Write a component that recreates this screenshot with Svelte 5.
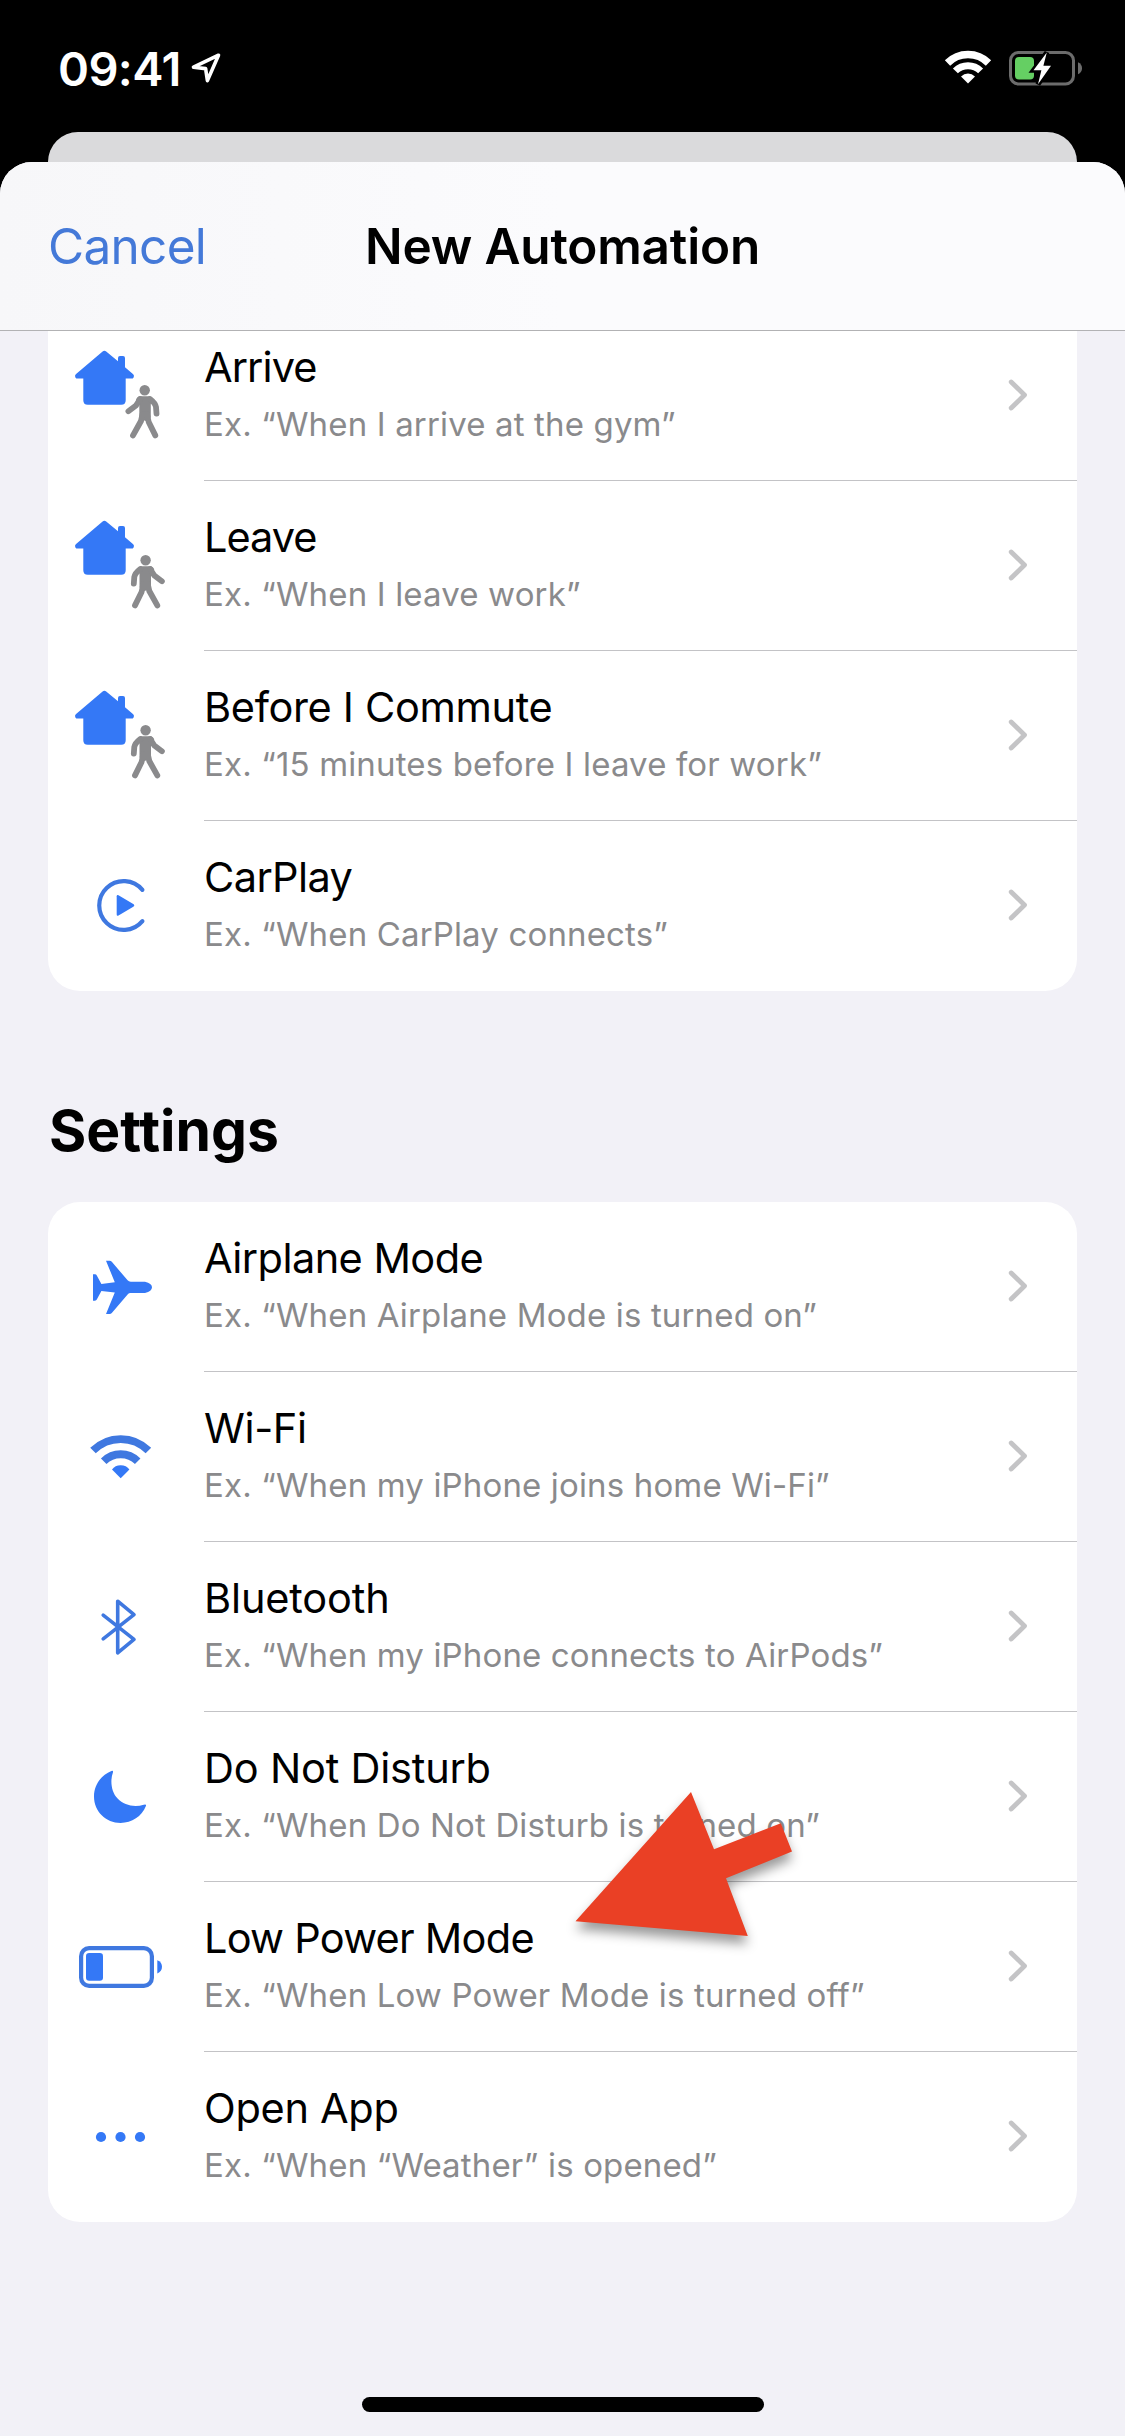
<script>
	// tracking is the letter spacing of the title in px
	const travel = [
		{ icon: 'arrive', title: 'Arrive', tracking: -0.9, example: 'When I arrive at the gym' },
		{ icon: 'leave', title: 'Leave', tracking: -1, example: 'When I leave work' },
		{ icon: 'leave', title: 'Before I Commute', tracking: -0.34, example: '15 minutes before I leave for work' },
		{ icon: 'carplay', title: 'CarPlay', tracking: -0.6, example: 'When CarPlay connects' }
	];

	const settings = [
		{ icon: 'airplane', title: 'Airplane Mode', tracking: -0.55, example: 'When Airplane Mode is turned on' },
		{ icon: 'wifi', title: 'Wi-Fi', tracking: -0.4, example: 'When my iPhone joins home Wi-Fi' },
		{ icon: 'bluetooth', title: 'Bluetooth', tracking: -0.15, example: 'When my iPhone connects to AirPods' },
		{ icon: 'moon', title: 'Do Not Disturb', tracking: -0.2, example: 'When Do Not Disturb is turned on' },
		{ icon: 'battery', title: 'Low Power Mode', tracking: -0.75, example: 'When Low Power Mode is turned off' },
		{ icon: 'dots', title: 'Open App', tracking: -0.3, example: 'When “Weather” is opened' }
	];
</script>

{#snippet walker()}
	<g class="walker">
		<circle cx="96.7" cy="79.3" r="5.2" />
		<path d="M92 85.2H101.5Q103.5 85.2 104 88L102.8 93V106.5L97.5 110L91.3 107V93L88 88.5Q89.5 85.2 92 85.2Z" />
		<path class="limb" d="M92.2 88L88 94.5L80.4 100.2M102 88Q107.2 92 108 96L108.5 102.6M94.6 103L93 110L85 124.4M99 103L100.7 111L107.3 124.4" />
	</g>
{/snippet}

{#snippet glyph(name)}
	<svg class="glyph" viewBox="0 0 156 170">
		{#if name === 'arrive' || name === 'leave'}
			<path
				class="house"
				d="M54.6 40.4Q56.4 39 58.2 40.4L70 50.2V47Q70 45 72 45H75Q77 45 77 47V56.2L85.2 63.2Q86.6 64.6 85.6 66.4Q84.9 67.6 83.4 67.6H77.7V89.2Q77.7 93.8 73.2 93.8H39.8Q35.3 93.8 35.3 89.2V67.6H29.6Q28.1 67.6 27.4 66.4Q26.4 64.6 27.8 63.2Z"
			/>
			{#if name === 'leave'}
				<g transform="matrix(-1 0 0 1 194.3 0)">{@render walker()}</g>
			{:else}
				{@render walker()}
			{/if}
		{:else if name === 'carplay'}
			<path class="line" stroke-width="4.2" d="M94.4 68.9A24.4 24.4 0 1 0 94.4 100.1" />
			<path d="M68.7 75.3Q68.7 73.4 70.5 74.3L85.7 83.3Q87 84.4 85.7 85.4L70.5 94.4Q68.7 95.3 68.7 93.4Z" />
		{:else if name === 'airplane'}
			<path
				d="M58 58.7H61.6Q62.9 58.7 63.8 59.8L79.6 78.3Q80.8 79.7 82.7 79.7H97Q104 81.5 104 85.3Q104 89.2 97 91H82.7Q80.8 91 79.6 92.4L63.8 110.9Q62.9 112 61.6 112H58L66.8 90.4L53.4 89L48.8 97.6Q48.2 98.7 47 98.7H45V72.3H47Q48.2 72.3 48.8 73.4L53.4 82L66.8 80.3Z"
			/>
		{:else if name === 'wifi'}
			<path class="line flat" stroke-width="7.8" d="M45 78.6A39 39 0 0 1 100.4 78.6M55.7 89.3A24 24 0 0 1 89.7 89.3" />
			<path d="M72.7 106.2L64 97.6Q67 93.2 72.7 93.2T81.4 97.6Z" />
		{:else if name === 'bluetooth'}
			<path class="line" stroke-width="3.6" d="M55.2 73.2L86 97.4L69.7 110.8V59.2L86 72.6L55.2 96.8" />
		{:else if name === 'moon'}
			<path
				d="M63.4 58.9Q65.4 58.2 65 60.2C62 68 63 79.5 69.6 86.6C76 93.6 86.5 95.5 95.8 92.8Q98.6 92 97.9 94C93.8 104.4 83.8 110.9 72.6 110.9C57.9 110.9 46 99.5 46 84.5C46 73 53 63 63.4 58.9Z"
			/>
		{:else if name === 'battery'}
			<rect class="line" stroke-width="4.2" x="33.1" y="66.2" width="70.8" height="37.6" rx="8" />
			<rect x="38" y="71" width="17" height="27.8" rx="3.2" />
			<path d="M109.3 78.2Q114 80 114 84.8T109.3 91.4Z" />
		{:else if name === 'dots'}
			<circle cx="53" cy="85" r="5.1" />
			<circle cx="72.5" cy="85" r="5.1" />
			<circle cx="92" cy="85" r="5.1" />
		{/if}
	</svg>
{/snippet}

{#snippet row(item)}
	<li class="row">
		{@render glyph(item.icon)}
		<div class="content">
			<div class="copy">
				<span class="title" style:letter-spacing="{item.tracking}px">{item.title}</span>
				<span class="example">Ex. “{item.example}”</span>
			</div>
			<svg class="chevron" viewBox="0 0 20 32">
				<path d="M3.2 3L16.5 16L3.2 29" />
			</svg>
		</div>
	</li>
{/snippet}

<div class="phone">
	<div class="status">
		<div class="clock">
			<span class="time">09:41</span>
			<svg class="location" width="30" height="30" viewBox="0 0 30 30">
				<path d="M27.5 2.2L2.5 14.2L14.6 15.6L16.4 27.6Z" />
			</svg>
		</div>
		<div class="indicators">
			<svg width="48" height="34" viewBox="0 0 48 34">
				<g class="signal">
					<path stroke-width="7.5" d="M3.5 13A29 29 0 0 1 44.5 13" />
					<path stroke-width="7" d="M11.4 20.9A17.8 17.8 0 0 1 36.6 20.9" />
				</g>
				<path fill="#fff" d="M24 33.5L17 26.4Q20 23.6 24 23.6T31 26.4Z" />
			</svg>
			<svg width="74" height="36" viewBox="0 0 74 36">
				<rect class="shell" x="1.5" y="2.5" width="63" height="31.5" rx="8" />
				<path fill="#6c6c6c" d="M69 12.2Q73 14 73 18.2T69 24.2Z" />
				<rect fill="#65cf63" x="6" y="7" width="19" height="22.5" rx="4" />
				<path class="bolt" d="M37.8 2.5L24.5 20.2H32.4L29 34.2L42 15.8H34.4Z" />
			</svg>
		</div>
	</div>

	<div class="behind"></div>

	<div class="sheet">
		<header>
			<span class="cancel">Cancel</span>
			<h1>New Automation</h1>
		</header>
		<div class="scroll">
			<ul class="card continued">
				{#each travel as item}
					{@render row(item)}
				{/each}
			</ul>
			<h2>Settings</h2>
			<ul class="card">
				{#each settings as item}
					{@render row(item)}
				{/each}
			</ul>
		</div>
	</div>

	<svg class="pointer" width="240" height="180" viewBox="0 0 240 180">
		<path d="M126 12L149 69.3L215.8 43.3L227 71.5L161 98.3L182.8 156L10.5 141.2Z" />
	</svg>
	<div class="home-bar"></div>
</div>

<style>
	:global(body) {
		margin: 0;
		background: #000;
	}

	.phone {
		position: relative;
		display: flex;
		flex-direction: column;
		width: 1125px;
		height: 2436px;
		overflow: hidden;
		background: #000;
		color: #000;
		font-family: Inter, 'Liberation Sans', sans-serif;
	}

	.status {
		display: flex;
		justify-content: space-between;
		box-sizing: border-box;
		height: 132px;
		padding: 50px 42px 0 58px;
		color: #fff;
	}

	.clock,
	.indicators {
		display: flex;
		height: 36px;
	}

	.time {
		font-size: 47px;
		font-weight: 600;
		line-height: 38px;
		letter-spacing: -0.6px;
	}

	.location {
		margin: 3px 0 0 10px;
		fill: none;
		stroke: #fff;
		stroke-width: 3.6;
		stroke-linejoin: round;
	}

	.indicators {
		gap: 17px;
	}

	.signal {
		fill: none;
		stroke: #fff;
	}

	.shell {
		fill: none;
		stroke: #6c6c6c;
		stroke-width: 3;
	}

	.bolt {
		fill: #fff;
		stroke: #000;
		stroke-width: 5;
		paint-order: stroke;
	}

	.behind {
		height: 30px;
		margin: 0 48px;
		border-radius: 30px 30px 0 0;
		background: #dadadc;
	}

	.sheet {
		display: flex;
		flex: 1;
		flex-direction: column;
		overflow: hidden;
		border-radius: 32px 32px 0 0;
		background: #f2f1f7;
	}

	header {
		display: grid;
		grid-template-columns: 1fr auto 1fr;
		align-items: center;
		box-sizing: border-box;
		height: 169px;
		padding: 0 48px;
		border-bottom: 1px solid #b2b2b4;
		background: linear-gradient(90deg, #f7f7f9, #fbfbfd 50%);
		line-height: 60px;
	}

	.cancel {
		color: #4479d8;
		font-size: 49.5px;
		letter-spacing: -0.7px;
	}

	h1 {
		margin: 0;
		font-size: 49.5px;
		font-weight: 600;
		letter-spacing: -0.17px;
	}

	.scroll {
		flex: 1;
		overflow: hidden;
		padding: 0 48px;
	}

	.card {
		margin: 0;
		padding: 0;
		overflow: hidden;
		list-style: none;
		border-radius: 32px;
		background: #fff;
	}

	/* already scrolled under the header */
	.continued {
		margin-top: -20px;
		border-radius: 0 0 32px 32px;
	}

	h2 {
		margin: 0;
		padding: 105px 0 36px 1px;
		font-size: 57px;
		font-weight: 700;
		line-height: 70px;
		letter-spacing: 0;
	}

	.row {
		display: flex;
		height: 170px;
	}

	.glyph {
		flex: none;
		width: 156px;
		height: 170px;
		fill: #3478f6;
	}

	.line {
		fill: none;
		stroke: #3f78e0;
		stroke-linecap: round;
		stroke-linejoin: round;
	}

	.flat {
		stroke-linecap: butt;
	}

	.walker {
		fill: #8a8a8c;
	}

	.limb {
		fill: none;
		stroke: #8a8a8c;
		stroke-width: 5.8;
		stroke-linecap: round;
		stroke-linejoin: round;
	}

	.content {
		display: flex;
		flex: 1;
		justify-content: space-between;
		border-bottom: 1px solid #c3c3c6;
	}

	.row:last-child .content {
		border-bottom-color: transparent;
	}

	.copy {
		display: flex;
		flex-direction: column;
		gap: 9px;
		padding-top: 28px;
		white-space: nowrap;
	}

	.title {
		font-size: 41.5px;
		line-height: 56px;
	}

	.example {
		color: #8a8a8c;
		font-size: 33px;
		line-height: 40px;
		letter-spacing: 0.15px;
	}

	.chevron {
		width: 20px;
		height: 32px;
		margin: 68px 49px 0 0;
		fill: none;
		stroke: #c4c4c6;
		stroke-width: 4.8;
		stroke-linecap: round;
		stroke-linejoin: round;
	}

	.pointer {
		position: absolute;
		top: 1780px;
		left: 565px;
		overflow: visible;
		fill: #ea4025;
		filter: drop-shadow(0 8px 6px rgba(0, 0, 0, 0.4));
	}

	.home-bar {
		position: absolute;
		bottom: 24px;
		left: 362px;
		width: 402px;
		height: 15px;
		border-radius: 8px;
		background: #000;
	}
</style>
